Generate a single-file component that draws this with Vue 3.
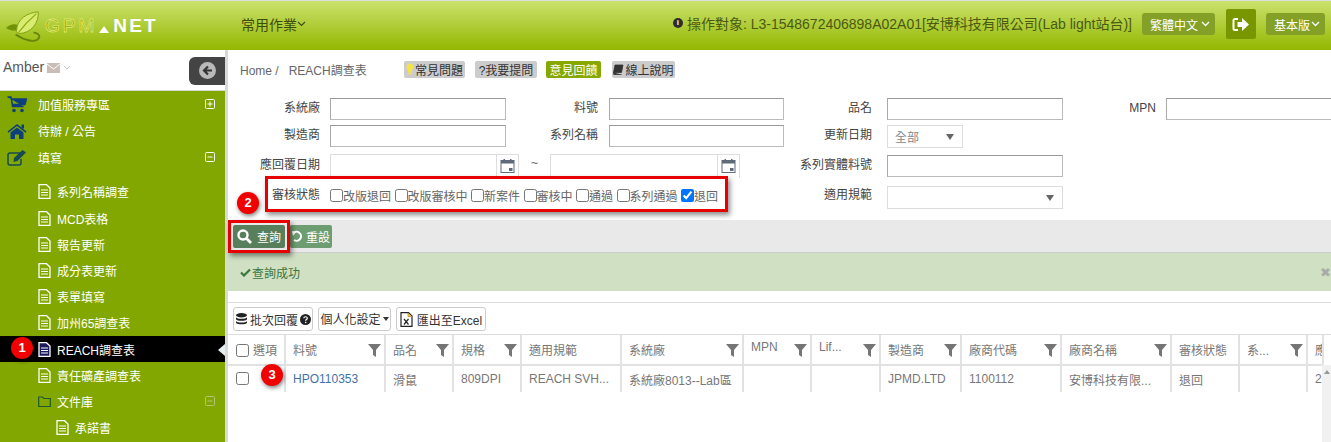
<script setup>
const menuTop = [
  { label: '加值服務專區', icon: 'cart', toggle: '+' },
  { label: '待辦 / 公告', icon: 'home' },
  { label: '填寫', icon: 'edit', toggle: '-' }
];
const subMenu = ['系列名稱調查', 'MCD表格', '報告更新', '成分表更新', '表單填寫', '加州65調查表', 'REACH調查表', '責任礦產調查表'];
const statuses = [
  { label: '改版退回' }, { label: '改版審核中' }, { label: '新案件' }, { label: '審核中' },
  { label: '通過' }, { label: '系列通過' }, { label: '退回', checked: true }
];
const columns = [
  { title: '料號', width: 100, value: 'HPO110353', filter: true, link: true },
  { title: '品名', width: 68, value: '滑鼠', filter: true },
  { title: '規格', width: 68, value: '809DPI', filter: true },
  { title: '適用規範', width: 100, value: 'REACH SVH...' },
  { title: '系統廠', width: 122, value: '系統廠8013--Lab區', filter: true },
  { title: 'MPN', width: 68, value: '', filter: true, high: true },
  { title: 'Lif...', width: 69, value: '', filter: true, high: true },
  { title: '製造商', width: 81, value: 'JPMD.LTD', filter: true },
  { title: '廠商代碼', width: 100, value: '1100112', filter: true },
  { title: '廠商名稱', width: 110, value: '安博科技有限...', filter: true },
  { title: '審核狀態', width: 68, value: '退回' },
  { title: '系...', width: 68, value: '', filter: true },
  { title: '應回覆日期', width: 16, value: '2019' }
];
</script>

<template>
  <div class="page">
    <header class="topbar">
      <div class="logo">
        <svg class="leaf" width="40" height="34" viewBox="0 0 42 36">
          <path d="M1 20 C6 15 12 15 17 19 C13 24 7 24 1 20Z" fill="#6f9208" />
          <path d="M12 24 C12 10 24 4 35 3 C36 14 28 26 14 26Z" fill="#d9ec70" stroke="#7f9f10" stroke-width="1" />
          <path d="M14 25 C20 17 26 11 33 5" fill="none" stroke="#8fae14" stroke-width="1.2" />
          <path d="M11 27 C20 33 33 37 36 30 C37 27 33 25 30 25" fill="none" stroke="#66860a" stroke-width="2" />
        </svg>
        <span class="gpm">GPM</span>
        <span class="tri"></span>
        <span class="net">NET</span>
      </div>
      <div class="topnav">常用作業<svg width="9" height="6" viewBox="0 0 9 6"><path d="M1 1l3.5 3.5L8 1" fill="none" stroke="#3f4d10" stroke-width="1.2" /></svg></div>
      <div class="topright">
        <span class="info-dot">i</span>
        <span class="target">操作對象: L3-1548672406898A02A01[安博科技有限公司(Lab light站台)]</span>
        <span class="top-btn lang">繁體中文<svg width="9" height="6" viewBox="0 0 9 6"><path d="M1 1l3.5 3.5L8 1" fill="none" stroke="#fff" stroke-width="1.3" /></svg></span>
        <span class="logout">
          <svg width="18" height="15" viewBox="0 0 18 15"><path d="M6 2H3a1.500 1.500 0 0 0-1.500 1.500v8A1.500 1.500 0 0 0 3 13h3" fill="none" stroke="#fff" stroke-width="2" /><path d="M5.500 5H10V1l7 6.500-7 6.500v-4H5.500z" fill="#fff" /></svg>
        </span>
        <span class="top-btn version">基本版<svg width="9" height="6" viewBox="0 0 9 6"><path d="M1 1l3.500 3.500L8 1" fill="none" stroke="#fff" stroke-width="1.3" /></svg></span>
      </div>
    </header>

    <div class="body-row">
      <aside class="sidebar">
        <div class="user">
          <span class="user-name">Amber</span>
          <svg class="user-mail" width="13" height="10" viewBox="0 0 13 10"><rect width="13" height="10" fill="#c9bdb6" /><path d="M0 1l6.500 5L13 1" fill="none" stroke="#fff" stroke-width="1" /></svg>
          <svg class="user-mail" width="8" height="5" viewBox="0 0 8 5"><path d="M1 1l3 3 3-3" fill="none" stroke="#c4c4c4" stroke-width="1" /></svg>
          <span class="collapse">
            <svg width="17" height="17" viewBox="0 0 17 17"><circle cx="8.500" cy="8.500" r="8.500" fill="#b9b9b9" /><path d="M13 8.500H6M9 4.500l-4 4 4 4" fill="none" stroke="#333" stroke-width="2.200" /></svg>
          </span>
        </div>
        <nav class="menu">
          <div v-for="item in menuTop" :key="item.label" class="menu-top">
            <svg v-if="item.icon === 'cart'" class="top-icon" width="19" height="17" viewBox="0 0 19 17"><path d="M0 1h3.500l1.500 9.500h11M4 3h15l-1.500 5.500H5z" fill="#0e3f7d" stroke="#0e3f7d" stroke-width="1.300" /><circle cx="6.500" cy="14.500" r="1.800" fill="#0e3f7d" /><circle cx="14.500" cy="14.500" r="1.800" fill="#0e3f7d" /></svg>
            <svg v-else-if="item.icon === 'home'" class="top-icon" width="19" height="16" viewBox="0 0 19 16"><path d="M0 8.500L9.500 1 19 8.500l-1 1.200-8.500-6.700-8.500 6.700z" fill="#0e3f7d" /><path d="M3 9.500l6.500-5 6.500 5V16h-4.500v-4.500h-4V16H3z" fill="#0e3f7d" /><rect x="14" y="1.500" width="2.500" height="4" fill="#0e3f7d" /></svg>
            <svg v-else class="top-icon" width="20" height="17" viewBox="0 0 20 17"><path d="M13 4H3a2 2 0 0 0-2 2v8a2 2 0 0 0 2 2h9a2 2 0 0 0 2-2v-4" fill="none" stroke="#164a52" stroke-width="1.500" /><path d="M7 9L15.500 1 19 3.500 10.500 12 6.500 13z" fill="#164a52" /></svg>
            <span class="menu-label">{{ item.label }}</span>
            <span v-if="item.toggle" class="toggle">
              <svg width="10" height="10" viewBox="0 0 10 10"><rect x=".5" y=".5" width="9" height="9" rx="1" fill="none" stroke="#fff" /><path d="M2.500 5h5" stroke="#fff" /><path v-if="item.toggle === '+'" d="M5 2.500v5" stroke="#fff" /></svg>
            </span>
          </div>
          <div class="sub-list">
            <div v-for="name in subMenu" :key="name" class="sub-item" :class="{ active: name === 'REACH調查表' }">
              <svg class="doc" width="13" height="15" viewBox="0 0 13 15"><path d="M1 .7h7.500L12 4v10.300H1z" :fill="name === 'REACH調查表' ? '#1a1a5c' : 'none'" stroke="#fff" stroke-width="1.300" /><path d="M3 6h7M3 8.500h7M3 11h7" stroke="#fff" /></svg>
              <span>{{ name }}</span>
            </div>
            <div class="sub-item">
              <svg class="doc" width="13" height="11" viewBox="0 0 13 11"><path d="M.7 1h4l1 1.500h6.600v8H.7z" fill="none" stroke="#1f5a2c" stroke-width="1.200" /></svg>
              <span>文件庫</span>
              <span class="toggle"><svg width="10" height="10" viewBox="0 0 10 10"><rect x=".5" y=".5" width="9" height="9" rx="1" fill="none" stroke="#b6c66e" /><path d="M2.500 5h5" stroke="#b6c66e" /></svg></span>
            </div>
            <div class="sub-item nested">
              <svg class="doc" width="13" height="15" viewBox="0 0 13 15"><path d="M1 .7h7.500L12 4v10.300H1z" fill="none" stroke="#fff" stroke-width="1.300" /><path d="M3 6h7M3 8.500h7M3 11h7" stroke="#fff" /></svg>
              <span>承諾書</span>
            </div>
          </div>
        </nav>
      </aside>

      <main class="content">
        <div class="crumbs">
          <span class="crumb">Home&nbsp;/&nbsp;&nbsp; REACH調查表</span>
          <span class="tag tag-faq"><svg width="8" height="12" viewBox="0 0 8 12"><path d="M4 .5a3.500 3.500 0 0 0-2 6.400V9h4V6.900A3.500 3.500 0 0 0 4 .5z" fill="#f6e34a" /><rect x="2.500" y="9.500" width="3" height="2" fill="#f6e34a" /></svg>常見問題</span>
          <span class="tag tag-ask">?我要提問</span>
          <span class="tag tag-fb">意見回饋</span>
          <span class="tag tag-doc"><svg width="11" height="11" viewBox="0 0 11 11"><path d="M2 1h8l-1.500 7.500h-8zM.5 8.500L.8 10.500h7.700" fill="#333" stroke="#333" stroke-width=".8" /></svg>線上說明</span>
        </div>

        <form class="filter" @submit.prevent>
          <label class="f-label">系統廠</label><div class="cell"><input class="txt" /></div>
          <label class="f-label">料號</label><div class="cell mid"><input class="txt" /></div>
          <label class="f-label">品名</label><div class="cell far"><input class="txt" /></div>
          <label class="f-label">MPN</label><div class="cell"><input class="txt wide" /></div>

          <label class="f-label">製造商</label><div class="cell"><input class="txt" /></div>
          <label class="f-label">系列名稱</label><div class="cell mid"><input class="txt" /></div>
          <label class="f-label">更新日期</label>
          <div class="cell far span-rest"><div class="fake-select short"><span>全部</span><i class="caret"></i></div></div>

          <label class="f-label">應回覆日期</label>
          <div class="date-range">
            <div class="date first"><span class="date-input"></span><span class="date-btn"><svg width="15" height="15" viewBox="0 0 15 15"><rect x="1" y="2.500" width="13" height="12" fill="#fff" stroke="#5f6a7a" /><rect x="1" y="2.500" width="13" height="3" fill="#5f6a7a" /><rect x="3.500" y="1" width="1.500" height="3" fill="#5f6a7a" /><rect x="10" y="1" width="1.500" height="3" fill="#5f6a7a" /><rect x="9" y="10" width="3.500" height="3" fill="#5f6a7a" /></svg></span></div>
            <span class="tilde">~</span>
            <div class="date"><span class="date-input"></span><span class="date-btn"><svg width="15" height="15" viewBox="0 0 15 15"><rect x="1" y="2.500" width="13" height="12" fill="#fff" stroke="#5f6a7a" /><rect x="1" y="2.500" width="13" height="3" fill="#5f6a7a" /><rect x="3.500" y="1" width="1.500" height="3" fill="#5f6a7a" /><rect x="10" y="1" width="1.500" height="3" fill="#5f6a7a" /><rect x="9" y="10" width="3.500" height="3" fill="#5f6a7a" /></svg></span></div>
          </div>
          <label class="f-label">系列實體料號</label>
          <div class="cell far span-rest"><input class="txt" /></div>

          <label class="f-label low">審核狀態</label>
          <div class="status-list">
            <label v-for="s in statuses" :key="s.label" class="status"><input type="checkbox" :checked="s.checked" />{{ s.label }}</label>
          </div>
          <label class="f-label low">適用規範</label>
          <div class="cell far span-rest"><div class="fake-select"><span></span><i class="caret"></i></div></div>
        </form>

        <div class="actions">
          <button class="btn-search">
            <svg width="15" height="15" viewBox="0 0 15 15"><circle cx="6" cy="6" r="4.500" fill="none" stroke="#fff" stroke-width="2.400" /><path d="M9.500 9.500l4.500 4.500" stroke="#fff" stroke-width="2.800" /></svg>
            查詢
          </button>
          <button class="btn-reset">
            <svg width="11" height="12" viewBox="0 0 11 12"><path d="M1 3.500A4.500 4.500 0 1 1 2 10" fill="none" stroke="#fff" stroke-width="2" /><path d="M0 1l4.500 .5L1 6z" fill="#fff" /></svg>
            重設
          </button>
        </div>

        <div class="alert">
          <span class="alert-text"><svg width="11" height="9" viewBox="0 0 11 9"><path d="M1 4.500l3 3L10 1.500" fill="none" stroke="#3c763d" stroke-width="2.200" /></svg>查詢成功</span>
          <span class="close">✖</span>
        </div>

        <div class="grid-wrap">
          <div class="toolbar">
            <button class="tool t-batch">
              <svg width="13" height="12" viewBox="0 0 13 12"><ellipse cx="6.500" cy="2.300" rx="5.500" ry="2.200" fill="#222" /><path d="M1 4.200c1 2 10 2 11 0v2c-1 2-10 2-11 0zM1 8c1 2 10 2 11 0v1.700c-1 2.200-10 2.200-11 0z" fill="#222" /></svg>
              批次回覆
              <svg width="11" height="11" viewBox="0 0 11 11"><circle cx="5.500" cy="5.500" r="5.500" fill="#222" /><path d="M3.800 4.300c0-2.100 3.500-2.100 3.500 0 0 1.300-1.700 1.200-1.700 2.500" fill="none" stroke="#fff" stroke-width="1.200" /><rect x="5" y="7.800" width="1.300" height="1.300" fill="#fff" /></svg>
            </button>
            <button class="tool t-custom">個人化設定<i class="mini-caret"></i></button>
            <button class="tool t-excel">
              <svg width="13" height="15" viewBox="0 0 13 15"><path d="M1 .7h7.500L12 4v10.300H1z" fill="#fff" stroke="#222" stroke-width="1.200" /><path d="M8 1v3.500h4" fill="#f0c040" stroke="#c09020" stroke-width=".8" /><path d="M4 7l4.500 5.500M8.500 7L4 12.500" stroke="#222" stroke-width="1.200" /></svg>
              匯出至Excel
            </button>
          </div>

          <div class="table-area">
            <table class="grid">
              <colgroup>
                <col style="width: 57px" />
                <col v-for="c in columns" :key="c.title" :style="{ width: c.width + 'px' }" />
              </colgroup>
              <thead>
                <tr>
                  <th class="check-cell"><input type="checkbox" /><span class="opt">選項</span></th>
                  <th v-for="c in columns" :key="c.title">
                    <span class="th-text" :class="{ high: c.high }">{{ c.title }}</span>
                    <svg v-if="c.filter" class="funnel" width="13" height="13" viewBox="0 0 13 13"><path d="M0 0h13L8 6v7L5 11V6z" fill="#757575" /></svg>
                  </th>
                </tr>
              </thead>
              <tbody>
                <tr>
                  <td class="check-cell"><input type="checkbox" /></td>
                  <td v-for="c in columns" :key="c.title" :class="{ link: c.link }">{{ c.value }}</td>
                </tr>
              </tbody>
            </table>
            <div class="scrollbar"><i></i></div>
          </div>
        </div>

        <!-- annotations on top of the screenshot -->
        <div class="mark mark-status"></div>
        <div class="mark mark-search"></div>
        <span class="badge b2">2</span>
        <span class="badge b3">3</span>
      </main>
    </div>
    <span class="badge b1">1</span>
  </div>
</template>

<style>
html, body {
  margin: 0;
  background: #fff;
  overflow: hidden;
}
</style>

<style scoped>
.page {
  position: relative;
  width: 1331px;
  height: 442px;
  overflow: hidden;
  font-family: "Liberation Sans", "Noto Sans CJK TC", sans-serif;
  font-size: 12px;
  color: #444;
}

/* top bar */
.topbar {
  height: 49px;
  border-top: 1px solid #ddd;
  display: flex;
  align-items: center;
  background: linear-gradient(#cbe26d, #93b700);
}
.logo {
  width: 241px;
  padding: 0 0 0 5px;
  box-sizing: border-box;
  display: flex;
  align-items: center;
}
.leaf { flex: none; }
.gpm {
  font-size: 19px;
  letter-spacing: 3px;
  color: #7f9a0c;
  -webkit-text-stroke: 0.8px #e0ea6a;
}
.tri {
  width: 0;
  height: 0;
  margin: 7px 4px 0 2px;
  border-left: 5px solid transparent;
  border-right: 5px solid transparent;
  border-bottom: 7px solid #fff;
}
.net {
  font-size: 19px;
  font-weight: 700;
  letter-spacing: 2.200px;
  color: #fff;
}
.topnav {
  font-size: 14px;
  color: #3f4d10;
  display: flex;
  align-items: center;
  margin-top: -4px;
}
.topright {
  margin-left: auto;
  display: flex;
  align-items: center;
  padding-right: 6px;
}
.info-dot {
  width: 10px;
  height: 10px;
  border-radius: 50%;
  background: #2d2d2d;
  color: #fff;
  font-size: 8px;
  font-weight: 700;
  line-height: 10px;
  text-align: center;
  margin: -6px 4px 0 0;
}
.target {
  font-size: 14px;
  color: #4a5a14;
  margin: -5px 10px 0 0;
}
.top-btn {
  height: 22px;
  box-sizing: border-box;
  padding-left: 8px;
  border-radius: 3px;
  background: #84a026;
  color: #fff;
  font-size: 12px;
  white-space: nowrap;
  display: flex;
  align-items: center;
  gap: 3px;
  margin-top: -3px;
}
.lang { width: 73px; }
.version { width: 59px; gap: 1px; }
.logout {
  width: 30px;
  height: 30px;
  margin: -3px 10px 0 11px;
  border-radius: 2px;
  background: #789600;
  display: flex;
  align-items: center;
  justify-content: center;
}

.body-row {
  display: flex;
  height: 392px;
}

/* sidebar */
.sidebar {
  flex: none;
  width: 225px;
  border-right: 3px solid #d9d9d9;
  background: #82a700;
  overflow: hidden;
}
.user {
  height: 40px;
  background: #fff;
  border-bottom: 1px solid #d5d5d5;
  display: flex;
  align-items: center;
  padding-left: 3px;
  gap: 3px;
}
.user-name { font-size: 14px; color: #555; margin-top: -6px; }
.user-mail { margin-top: -5px; }
.collapse {
  margin-left: auto;
  width: 36px;
  height: 28px;
  margin-top: 1px;
  border-radius: 6px 0 0 6px;
  background: #444;
  display: flex;
  align-items: center;
  justify-content: center;
}
.menu { color: #fff; }
.menu-top {
  height: 26.6px;
  display: flex;
  align-items: center;
  padding-left: 7px;
}
.top-icon { flex: none; width: 20px; }
.menu-label { margin-left: 11px; }
.toggle {
  margin-left: auto;
  margin-right: 10px;
  display: flex;
}
.sub-list { margin-top: 8px; }
.sub-item {
  height: 26.2px;
  display: flex;
  align-items: center;
  padding-left: 38px;
  position: relative;
}
.doc { flex: none; margin-right: 6px; }
.sub-item.active { background: #000; }
.sub-item.active::after {
  content: "";
  position: absolute;
  right: 0;
  top: 8px;
  border-top: 6px solid transparent;
  border-bottom: 6px solid transparent;
  border-right: 7px solid #e6eef2;
}
.sub-item.nested { padding-left: 56px; }

/* content */
.content {
  position: relative;
  flex: 1;
  min-width: 0;
  background: #fff;
}
.crumbs {
  height: 48px;
  display: flex;
  align-items: center;
  padding: 0 0 10px 12px;
  box-sizing: border-box;
}
.crumb {
  width: 164px;
  color: #666;
  flex: none;
}
.tag {
  height: 17px;
  margin-right: 10px;
  border-radius: 2px;
  background: #ccc;
  color: #333;
  display: flex;
  align-items: center;
  justify-content: center;
  gap: 1px;
  box-sizing: border-box;
}
.tag-faq { width: 61px; }
.tag-ask { width: 62px; margin-right: 9px; }
.tag-fb { width: 55px; margin-right: 11px; background: #87a800; color: #fff; }
.tag-doc { width: 63px; }

.filter {
  display: grid;
  grid-template-columns: 92px 186px 92px 186px 88px 191px 93px 175px;
  grid-template-rows: 27px 30px 31px 34px;
  height: 122px;
  overflow: hidden;
}
.f-label {
  text-align: right;
  line-height: 20px;
  color: #444;
  white-space: nowrap;
}
.f-label.low { line-height: 18px; }
.cell { padding-left: 10px; }
.cell.mid { padding-left: 11px; }
.cell.far { padding-left: 15px; }
.span-rest { grid-column: 6 / 9; }
.txt {
  display: block;
  box-sizing: border-box;
  width: 176px;
  height: 22px;
  padding: 0;
  border: 1px solid #bbb;
  border-top-color: #999;
  border-left-color: #aaa;
  background: #fff;
  outline: none;
}
.mid .txt { width: 175px; }
.wide { width: 180px; }
.fake-select {
  box-sizing: border-box;
  width: 176px;
  height: 23px;
  border: 1px solid #ddd;
  display: flex;
  align-items: center;
  justify-content: space-between;
  padding: 0 8px 0 7px;
  color: #888;
}
.fake-select.short { width: 76px; }
.caret {
  width: 0;
  height: 0;
  border-left: 4px solid transparent;
  border-right: 4px solid transparent;
  border-top: 6px solid #666;
}
.date-range {
  grid-column: 2 / 5;
  margin-left: 10px;
  display: flex;
  align-items: flex-start;
  margin-top: -1px;
}
.date {
  box-sizing: border-box;
  width: 190px;
  height: 24px;
  border: 1px solid #ddd;
  border-bottom: 0;
  display: flex;
}
.date.first { width: 189px; }
.date-input { flex: 1; }
.date-btn {
  width: 22px;
  border-left: 1px solid #ddd;
  display: flex;
  justify-content: center;
  padding-top: 3px;
  box-sizing: border-box;
}
.tilde { width: 31px; text-align: center; color: #666; line-height: 18px; }
.status-list {
  grid-column: 2 / 5;
  margin-left: 10px;
  display: flex;
  gap: 3.5px;
  white-space: nowrap;
  color: #666;
}
.status {
  display: flex;
  align-items: center;
  height: 18px;
}
.status input {
  width: 13px;
  height: 13px;
  margin: 0;
}

.actions {
  height: 33px;
  box-sizing: border-box;
  background: #e9e9e9;
  border-bottom: 1px solid #ccc;
  display: flex;
  align-items: center;
  padding-left: 5px;
  gap: 5px;
}
.actions button {
  border: 0;
  border-radius: 2px;
  color: #fff;
  font: inherit;
  height: 23px;
  padding: 0;
  display: flex;
  align-items: center;
  justify-content: center;
}
.btn-search { width: 52px; background: #587f5b; gap: 5px; }
.btn-reset { width: 42px; background: #6f9d72; gap: 3px; }
.alert {
  height: 38px;
  background: #cfe0c3;
  display: flex;
  align-items: center;
  justify-content: space-between;
  padding-left: 12px;
  color: #3c763d;
}
.alert-text { display: flex; align-items: center; gap: 1px; }
.close { color: #aaa; font-size: 13px; }

.grid-wrap {
  margin-top: 11px;
  border-top: 1px solid #ddd;
}
.toolbar {
  height: 31px;
  display: flex;
  align-items: center;
  gap: 5px;
  padding: 1px 0 0 5px;
  box-sizing: border-box;
}
.tool {
  height: 24px;
  padding: 0;
  border: 1px solid #ccc;
  border-radius: 3px;
  background: #fff;
  color: #333;
  font: inherit;
  display: flex;
  align-items: center;
  justify-content: center;
  gap: 2px;
}
.t-batch { width: 80px; }
.t-custom { width: 73px; margin-top: -1px; }
.t-excel { width: 90px; gap: 4px; }
.mini-caret {
  width: 0;
  height: 0;
  border-left: 3px solid transparent;
  border-right: 3px solid transparent;
  border-top: 4px solid #333;
}

.table-area {
  position: relative;
  height: 108px;
  overflow: hidden;
  border-top: 1px solid #ddd;
}
.grid {
  table-layout: fixed;
  border-collapse: collapse;
  width: 1095px;
  color: #777;
}
.grid th,
.grid td {
  border-right: 2px solid #e2e2e2;
  padding: 0 7px;
  font-weight: 400;
  text-align: left;
  white-space: nowrap;
  overflow: hidden;
  box-sizing: border-box;
}
.grid th {
  height: 30px;
  border-bottom: 2px solid #e2e2e2;
  position: relative;
}
.grid td { height: 27px; }
.th-text { display: block; }
.th-text.high { margin-top: -5px; }
.funnel {
  position: absolute;
  right: 3px;
  top: 9px;
}
.grid .link { color: #3f73aa; }
.grid .check-cell { padding: 0 0 0 8px; }
.check-cell input { width: 13px; height: 13px; margin: 0; vertical-align: -2px; }
.opt { margin-left: 4px; }
.scrollbar {
  position: absolute;
  right: 0;
  top: 30px;
  bottom: 0;
  width: 9px;
  background: #f1f1f1;
}
.scrollbar i {
  position: absolute;
  left: 2px;
  top: 5px;
  border-left: 3px solid transparent;
  border-right: 3px solid transparent;
  border-bottom: 4px solid #999;
}

/* red annotations */
.mark {
  position: absolute;
  box-sizing: border-box;
  border: 3px solid #e60000;
  box-shadow: 2px 3px 5px rgba(0, 0, 0, 0.45);
}
.mark-status { left: 37px; top: 126px; width: 463px; height: 36px; }
.mark-search { left: 0; top: 170px; width: 62px; height: 33px; }
.badge {
  position: absolute;
  width: 22px;
  height: 22px;
  border-radius: 50%;
  background: #f10000;
  color: #fff;
  font-size: 13px;
  font-weight: 700;
  line-height: 22px;
  text-align: center;
  box-shadow: 1px 2px 4px rgba(0, 0, 0, 0.5);
}
.b1 { left: 11px; top: 337px; }
.b2 { left: 9px; top: 142px; }
.b3 { left: 33px; top: 314px; }
</style>
